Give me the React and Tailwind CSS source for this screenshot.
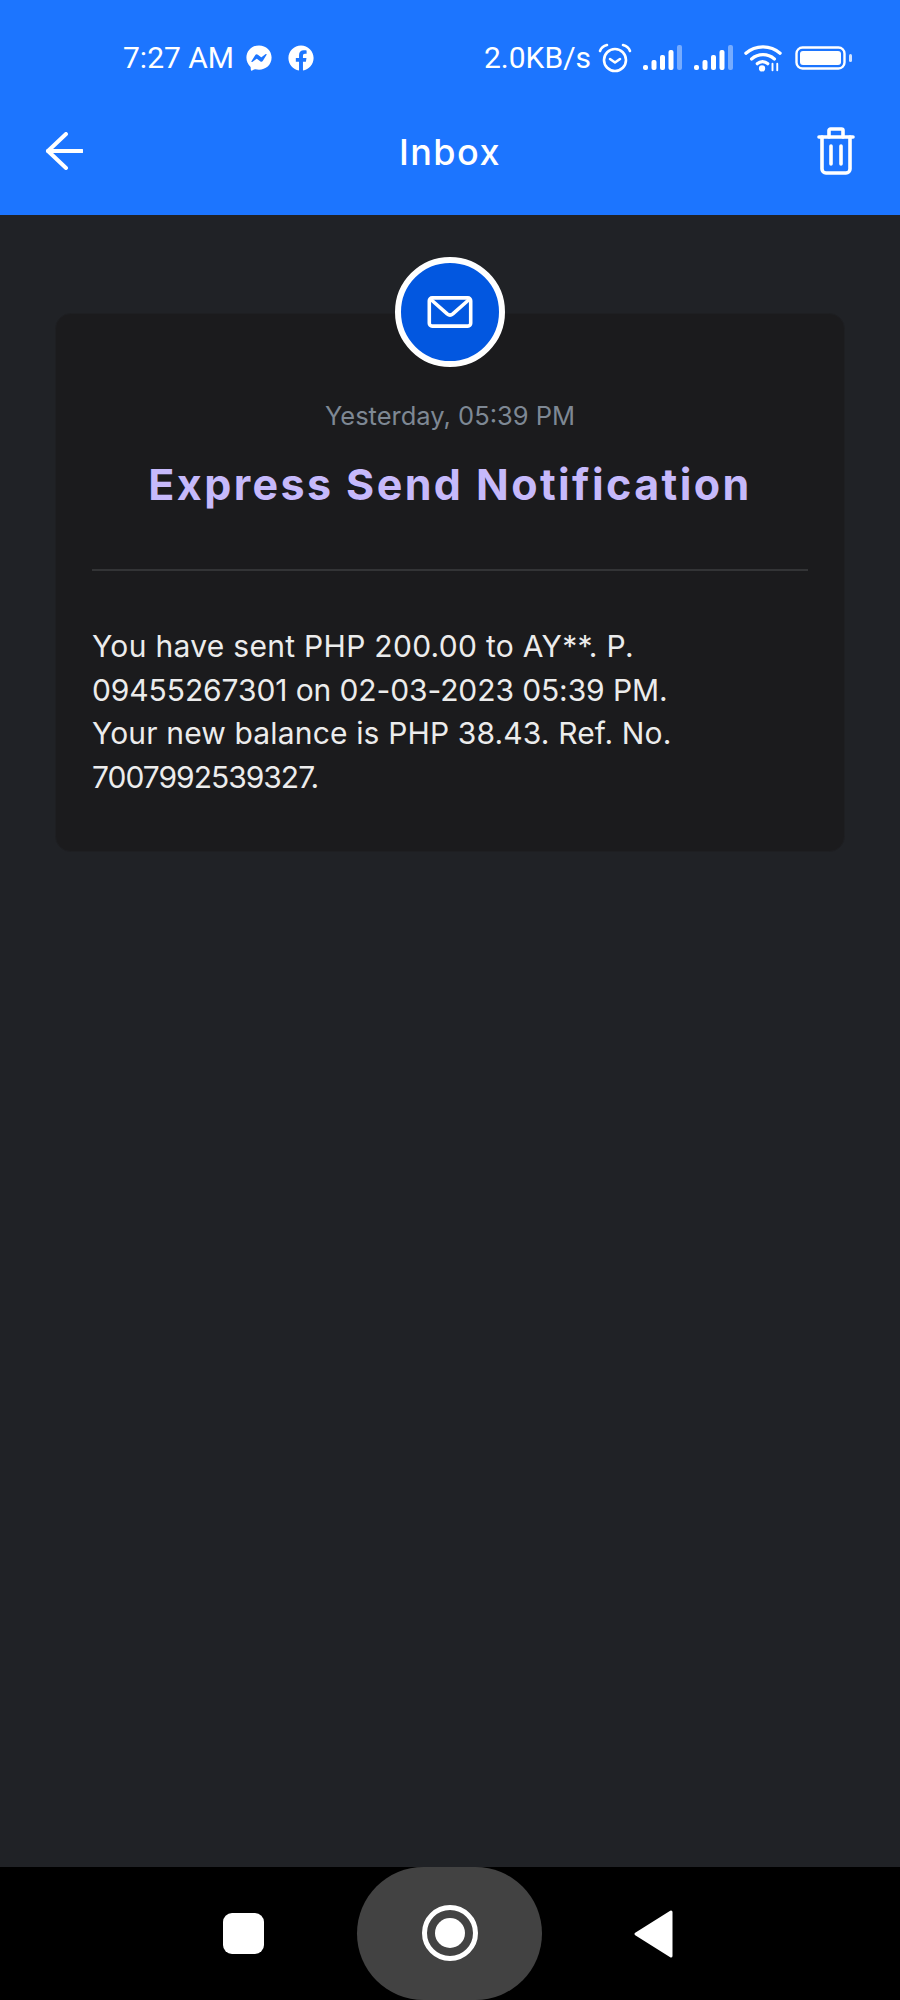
import React from 'react';
import { FaFacebook, FaFacebookMessenger } from 'react-icons/fa';

const SignalBars = ({ className }) => (
  <svg width="40" height="26" viewBox="0 0 40 26" fill="white" className={className}>
    <rect x="0" y="20" width="5" height="5" rx="2" />
    <rect x="8.5" y="15" width="5" height="10" rx="2" />
    <rect x="17" y="10" width="5" height="15" rx="2" />
    <rect x="25.5" y="5" width="5" height="20" rx="2" />
    <rect x="34" y="0" width="5" height="25" rx="2" opacity="0.4" />
  </svg>
);

const StatusBar = () => (
  <div className="h-[100px] pl-[123px] pr-[47px] flex items-center text-white text-[30px] font-['Roboto',sans-serif] pt-[16px]">
    <span className="leading-none">7:27 AM</span>
    <FaFacebookMessenger size={26} className="ml-[12px]" />
    <FaFacebook size={26} className="ml-[16px]" />
    <span className="ml-auto leading-none">2.0KB/s</span>
    <svg width="34" height="30" viewBox="0 0 34 30" fill="none" stroke="white" strokeWidth="2.6" strokeLinecap="round" strokeLinejoin="round" className="ml-[7px]">
      <circle cx="17" cy="17" r="11" />
      <path d="M12 16l5 3.5 5-3.5" />
      <path d="M2 8c1-3 3-5 7-6M32 8c-1-3-3-5-7-6" />
    </svg>
    <SignalBars className="ml-[11px]" />
    <SignalBars className="ml-[11px]" />
    <svg width="38" height="28" viewBox="0 0 40 28" fill="none" stroke="white" strokeWidth="3.4" strokeLinecap="round" className="ml-[10px]">
      <path d="M2 9c10-9 26-9 36 0" />
      <path d="M8 15c7-6 17-6 24 0" />
      <path d="M14 20c3-3 8-3 11 0" />
      <circle cx="19" cy="25" r="1.6" fill="white" />
      <path d="M30 20v7M35 20v7" strokeWidth="2" />
    </svg>
    <svg width="58" height="24" viewBox="0 0 58 24" fill="none" className="ml-[13px]">
      <rect x="1.5" y="1.5" width="48" height="21" rx="6" stroke="white" strokeWidth="2.4" />
      <rect x="5" y="5" width="41" height="14" rx="3" fill="white" />
      <rect x="54" y="8" width="3" height="8" rx="1.5" fill="white" opacity="0.8" />
    </svg>
  </div>
);

const AppBar = () => (
  <div className="h-[115px] pl-[45px] pr-[45px] flex items-start justify-between text-white">
    <svg width="38" height="38" viewBox="0 0 38 38" fill="none" stroke="white" strokeWidth="4" strokeLinecap="round" strokeLinejoin="round" className="mt-[32px]">
      <path d="M37 19H3" />
      <path d="M21 2L3 19l18 17" />
    </svg>
    <h1 className="mt-[29px] text-[36px] leading-[46px] font-medium tracking-[1.5px] font-['Inter',sans-serif]">Inbox</h1>
    <svg width="38" height="48" viewBox="0 0 38 48" fill="none" stroke="white" strokeWidth="3.6" strokeLinecap="round" strokeLinejoin="round" className="mt-[27px]">
      <path d="M2 10h34" />
      <path d="M12 10V3.5c0-.8.7-1.5 1.5-1.5h11c.8 0 1.5.7 1.5 1.5V10" />
      <path d="M5 10v32c0 2.2 1.8 4 4 4h20c2.2 0 4-1.8 4-4V10" />
      <path d="M14 19v18M24 19v18" />
    </svg>
  </div>
);

const MessageCard = () => (
  <div className="relative h-[539px] bg-[#1b1b1d] rounded-[16px] border border-[#1e1f22] px-[36px] pt-[87px]">
    <div className="absolute left-1/2 -translate-x-1/2 -top-[57px] w-[110px] h-[110px] rounded-full bg-[#0257e0] border-[6px] border-white flex items-center justify-center">
      <svg width="46" height="32" viewBox="0 0 48 34" fill="none" stroke="white" strokeWidth="3.8" strokeLinecap="round" strokeLinejoin="round">
        <rect x="2" y="2" width="44" height="30" rx="3" />
        <path d="M4 4l17 15c1.8 1.5 4.2 1.5 6 0L44 4" />
      </svg>
    </div>
    <p className="text-center text-[25.5px] leading-[30px] text-[#7e8894] font-['Inter',sans-serif]">Yesterday, 05:39 PM</p>
    <h2 className="mt-[26px] text-center text-[43px] leading-[54px] font-bold tracking-[2.4px] text-[#c6b9fb] font-['Inter',sans-serif]">Express Send Notification</h2>
    <div className="mt-[58px] h-[2px] bg-[#333436]" />
    <p className="mt-[54px] text-[30px] leading-[43.5px] text-[#ececec] font-['Inter',sans-serif]">
      <span className="tracking-[0.3px]">You have sent PHP 200.00 to AY**. P.</span><br />
      <span className="tracking-[-0.1px]">09455267301 on 02-03-2023 05:39 PM.</span><br />
      <span className="tracking-[0.15px]">Your new balance is PHP 38.43. Ref. No.</span><br />
      <span className="tracking-[-1px]">7007992539327.</span>
    </p>
  </div>
);

const NavBar = () => (
  <div className="h-[133px] bg-black flex items-start justify-center overflow-hidden pr-[3px]">
    <div className="w-[41px] h-[41px] mt-[46px] rounded-[9px] bg-white" />
    <div className="ml-[93px] w-[185px] h-[133px] rounded-[75px] bg-[#424242] flex justify-center pt-[38px]">
      <div className="w-[56px] h-[56px] rounded-full border-[5px] border-white flex items-center justify-center">
        <div className="w-[30px] h-[30px] rounded-full bg-white" />
      </div>
    </div>
    <svg width="40" height="48" viewBox="0 0 40 48" fill="white" stroke="white" strokeWidth="3" strokeLinejoin="round" className="ml-[92px] mt-[43px]">
      <path d="M37 2v44L2 24z" />
    </svg>
  </div>
);

export default function App() {
  return (
    <div className="w-[900px] h-[2000px] flex flex-col bg-[#202226]">
      <header className="bg-[#1c75ff]">
        <StatusBar />
        <AppBar />
      </header>
      <main className="flex-1 px-[55px] pt-[98px]">
        <MessageCard />
      </main>
      <NavBar />
    </div>
  );
}
